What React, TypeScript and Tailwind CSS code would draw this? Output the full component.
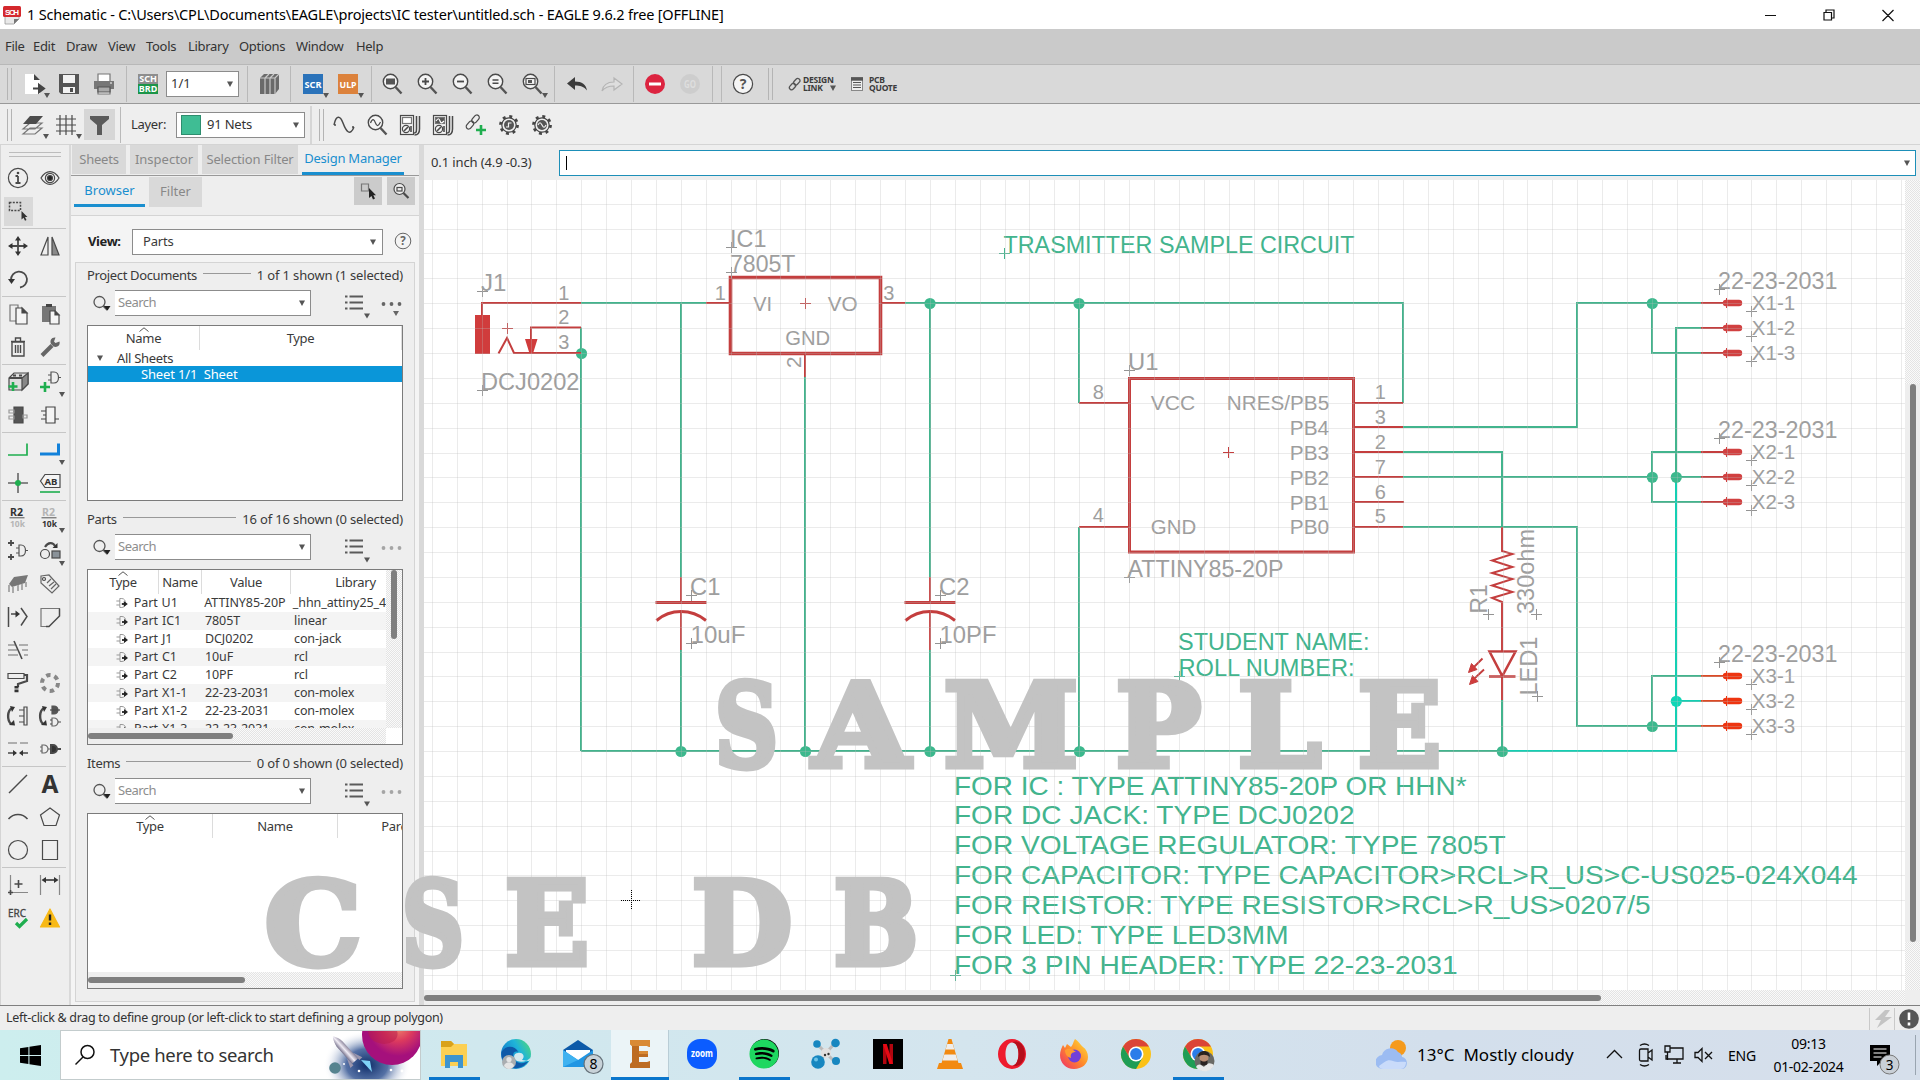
import React from "react";
import { FaSpotify } from "react-icons/fa";

type Kids = { children?: React.ReactNode };

/* ---------- small shared pieces ---------- */

function Ic({ children, caret = false, cx = 24, cy = 24 }: Kids & { caret?: boolean; cx?: number; cy?: number }) {
  return (
    <svg width="24" height="24" viewBox="0 0 24 24" fill="none" stroke="#4a4a4a" strokeWidth="1.2" className="shrink-0 overflow-visible">
      {children}
      {caret && <path d={`M${cx - 3} ${cy - 2}h6l-3 5z`} fill="#555" stroke="none" />}
    </svg>
  );
}

function Down({ className = "" }: { className?: string }) {
  return (
    <svg width="6" height="6" viewBox="0 0 6 6" className={className}>
      <path d="M0 .5h6L3 6z" fill="#555" />
    </svg>
  );
}

function Sep({ className = "" }: { className?: string }) {
  return (
    <div className={`flex h-9 shrink-0 justify-center ${className}`}>
      <div className="h-full w-px bg-[#b9b9b9]" />
    </div>
  );
}

function Grip() {
  return (
    <div className="flex h-8 w-4 shrink-0 items-stretch gap-[3px] pl-[7px]">
      <div className="w-px bg-[#b4b4b4]" />
      <div className="w-px bg-[#b4b4b4]" />
    </div>
  );
}

function Cell({ children, className = "w-[35px]" }: Kids & { className?: string }) {
  return <div className={`flex shrink-0 items-center justify-center ${className}`}>{children}</div>;
}

function Magnifier({ children, caret }: Kids & { caret?: boolean }) {
  return (
    <Ic caret={caret} cx={25} cy={23}>
      <circle cx="10.5" cy="9.5" r="7.2" fill="#f4f4f4" strokeWidth="1.4" />
      <path d="M15.5 15l6 6.500" strokeWidth="2.400" stroke="#555" />
      {children}
    </Ic>
  );
}

/* ---------- title and menu ---------- */

function TitleBar() {
  return (
    <div className="flex h-[29px] items-center bg-white pl-[3px]">
      <svg width="18" height="20" viewBox="0 0 18 20">
        <path d="M2 3h14v11l-5 5H2z" fill="#e9e9e9" stroke="#999" strokeWidth=".8" />
        <path d="M16 14l-5 5v-5z" fill="#777" />
        <rect width="18" height="11" rx="1.5" y="1" fill="#d4282d" />
        <text x="2" y="9.6" fontSize="8" fontWeight="bold" fill="#fff" textLength="14" fontFamily="Liberation Sans, sans-serif">SCH</text>
      </svg>
      <span className="ml-[6px] grow whitespace-pre text-[14.5px] tracking-[-0.19px] text-black">
        1 Schematic - C:\Users\CPL\Documents\EAGLE\projects\IC tester\untitled.sch - EAGLE 9.6.2 free [OFFLINE]
      </span>
      <svg width="160" height="28" viewBox="0 0 160 28" fill="none" stroke="#111" strokeWidth="1.2">
        <path d="M5 14.500h11M64 18.500v-7h7.500v7.500h-7.500zM66 11V9h8v8h-2M122.500 9l11 11M133.500 9l-11 11" />
      </svg>
    </div>
  );
}

function MenuBar() {
  const items = [
    ["File", "w-[28px]"], ["Edit", "w-[33px]"], ["Draw", "w-[42px]"], ["View", "w-[38px]"], ["Tools", "w-[42px]"],
    ["Library", "w-[51px]"], ["Options", "w-[57px]"], ["Window", "w-[60px]"], ["Help", "w-[40px]"],
  ];
  return (
    <div className="flex h-[35px] items-center bg-[#cacaca] pl-[5px] text-[13px] tracking-[-0.3px] text-[#333]">
      {items.map(([t, w]) => (
        <span key={t} className={`${w} shrink-0 whitespace-nowrap`}>{t}</span>
      ))}
    </div>
  );
}

/* ---------- toolbars ---------- */

function MainToolbar() {
  return (
    <div className="flex h-[40px] items-center border-t border-b border-t-[#b8b8b8] border-b-[#999] bg-[#d9d9d9]">
      <Grip />
      <Cell>
        <Ic caret cx={25} cy={23}>
          <path d="M3 2h9l6 6v14H3z" fill="#fff" stroke="none" />
          <path d="M12 2v6h6z" fill="#444" stroke="none" />
          <path d="M11 16.5h8M17 12.8l5 3.7-5 3.7z" stroke="#444" strokeWidth="2" fill="#444" />
        </Ic>
      </Cell>
      <Cell>
        <Ic>
          <path d="M2 2h20v20H4l-2-2z" fill="#555" stroke="none" />
          <path d="M6 3h12v8H6zM6 15h12v6H6z" fill="#f2f2f2" stroke="none" />
          <path d="M13 16h3v4h-3z" fill="#4c4c4c" stroke="none" />
        </Ic>
      </Cell>
      <Cell>
        <Ic>
          <path d="M6 2h12v8H6zM6 16h12v6H6z" fill="#fff" stroke="#777" />
          <path d="M2 9h20v8H2z" fill="#777" stroke="none" />
          <path d="M6 15h12v5H6z" fill="#aaa" stroke="#555" />
          <path d="M18 11h2" stroke="#fff" />
        </Ic>
      </Cell>
      <Sep className="w-[11px]" />
      <Cell className="w-[32px]">
        <div className="h-5 w-5 text-center text-[9px] leading-[10px] font-bold text-white">
          <div className="h-[10px] bg-[#8e8e8e]">SCH</div>
          <div className="h-[10px] bg-[#1c9548]">BRD</div>
        </div>
      </Cell>
      <div className="ml-[2px] flex h-[26px] w-[73px] items-center justify-between border border-[#8c8c8c] bg-white pr-[5px] pl-1 text-[13px] text-[#333]">
        1/1 <Down />
      </div>
      <Sep className="w-[16px]" />
      <Cell className="w-[28px]">
        <Ic>
          <path d="M3 6l4-4h15v15l-4 5H3z" fill="#6a6a6a" stroke="none" />
          <path d="M3 6h15l4-4M8 6v16M13 6v16M18 6v16M8 6l4-4M13 6l4-4" stroke="#c9c9c9" />
        </Ic>
      </Cell>
      <Sep className="w-[15px]" />
      <Cell className="w-[30px]">
        <Ic caret cx={25} cy={23}>
          <rect x="2" y="2" width="20" height="20" fill="#2b73ba" stroke="none" />
          <text x="3.5" y="15.5" fontSize="9.5" fontWeight="bold" fill="#fff" stroke="none" textLength="17" lengthAdjust="spacingAndGlyphs">SCR</text>
        </Ic>
      </Cell>
      <Cell className="w-[40px]">
        <Ic caret cx={25} cy={23}>
          <rect x="2" y="2" width="20" height="20" fill="#dc823c" stroke="none" />
          <text x="3.5" y="15.5" fontSize="9.5" fontWeight="bold" fill="#fff" stroke="none" textLength="17" lengthAdjust="spacingAndGlyphs">ULP</text>
        </Ic>
      </Cell>
      <Sep className="w-[6px]" />
      <Cell><Magnifier><rect x="6" y="6.5" width="9" height="6" fill="#555" stroke="none" /></Magnifier></Cell>
      <Cell><Magnifier><path d="M7 9.5h7M10.5 6v7" strokeWidth="1.8" /></Magnifier></Cell>
      <Cell><Magnifier><path d="M7 9.5h7" strokeWidth="1.8" /></Magnifier></Cell>
      <Cell><Magnifier><path d="M7.5 8h6M7.5 11.3h6" strokeWidth="1.5" /></Magnifier></Cell>
      <Cell><Magnifier caret><rect x="6" y="6.5" width="9" height="6" /><rect x="8" y="8" width="4" height="3" fill="#555" stroke="none" /></Magnifier></Cell>
      <Sep className="w-[10px]" />
      <Cell><Ic><path d="M10 5v4.500c7 0 11 3 12 9-3-4-7-5-12-5V18L2 11.500z" fill="#3c3c3c" stroke="none" /></Ic></Cell>
      <Cell><Ic><path d="M14 6v4C7 10 3 13 2 19c3-4 7-5 12-5v4l8-6z" fill="#dedede" stroke="#b5b5b5" /></Ic></Cell>
      <Sep className="w-[8px]" />
      <Cell><Ic><circle cx="12" cy="12" r="10" fill="#dc2440" stroke="none" /><path d="M6 12h12" stroke="#fff" strokeWidth="3" /></Ic></Cell>
      <Cell>
        <Ic>
          <circle cx="12" cy="12" r="10" fill="#cdcdcd" stroke="none" />
          <text x="6" y="15.5" fontSize="10" fontWeight="bold" fill="#dedede" stroke="none" textLength="12" lengthAdjust="spacingAndGlyphs">GO</text>
        </Ic>
      </Cell>
      <Sep className="w-[10px]" />
      <Sep className="w-[9px]" />
      <Cell className="w-[34px]">
        <Ic>
          <circle cx="12" cy="12" r="9.6" fill="#f5f5f5" strokeWidth="1.2" />
          <text x="12" y="17" fontSize="14" fontWeight="bold" fill="#555" stroke="none" textAnchor="middle">?</text>
        </Ic>
      </Cell>
      <div className="flex h-8 w-[28px] gap-[3px] pl-[8px]"><div className="w-px bg-[#b4b4b4]" /><div className="w-px bg-[#b4b4b4]" /></div>
      <svg width="13" height="14" viewBox="0 0 13 14" fill="none" stroke="#555" strokeWidth="1.3">
        <rect x="-3.6" y="-2" width="7.2" height="4.4" rx="2.2" transform="translate(8.6 4.6) rotate(-48)" />
        <rect x="-3.6" y="-2" width="7.2" height="4.4" rx="2.2" transform="translate(4.4 9.4) rotate(-48)" />
      </svg>
      <div className="ml-[2px] w-[48px] text-[8.5px] leading-[8px] font-bold tracking-[-0.25px] text-[#3c3c3c]">
        DESIGN
        <div className="flex items-center gap-[7px]">LINK <Down /></div>
      </div>
      <svg width="12" height="14" viewBox="0 0 12 14" stroke="#555" strokeWidth="1">
        <rect x=".5" y=".5" width="11" height="13" fill="#eee" stroke="#888" />
        <path d="M0 2h12" strokeWidth="3.4" />
        <path d="M2 5.500h8M2 8h8M2 10.500h8" />
      </svg>
      <div className="ml-[6px] text-[8.5px] leading-[8px] font-bold tracking-[-0.25px] text-[#3c3c3c]">PCB<br />QUOTE</div>
    </div>
  );
}

function Gear({ wave }: { wave: string }) {
  return (
    <Ic>
      <circle cx="12" cy="12" r="8.400" stroke="#444" strokeWidth="3" strokeDasharray="2.900 3.700" />
      <circle cx="12" cy="12" r="7.200" fill="#eee" stroke="#444" strokeWidth="1.200" />
      <circle cx="12" cy="12" r="5" fill="#555" stroke="none" />
      <path d={wave} stroke="#f2f2f2" strokeWidth="1.200" />
    </Ic>
  );
}

function Meter({ wave }: { wave?: boolean }) {
  return (
    <Ic>
      <rect x="2.5" y="2.5" width="13" height="19" fill="#f4f4f4" />
      <rect x="4.5" y="4.5" width="9" height="6" fill={wave ? "#555" : "#fff"} stroke="#777" />
      {wave && <path d="M5 8c2-3 3-3 4 0s2 2 4 0" stroke="#fff" />}
      <circle cx="8" cy="16" r="3.6" />
      <path d="M10 14l-4 4M13 13v6" strokeWidth="1.6" />
      <path d="M18.500 3v13c0 4-1 4-3 4M21.500 3v13c0 5-2 6-5 6" strokeWidth="1.500" />
    </Ic>
  );
}

function SecondToolbar() {
  return (
    <div className="flex h-[41px] items-center border-b border-[#d4d4d4] bg-[#eee] pt-px">
      <Grip />
      <Cell className="w-[34px]">
        <Ic caret cx={25} cy={23}>
          <path d="M2 21l7-6h12l-7 6zM2 16l7-6h12l-7 6z" fill="#eee" stroke="#777" />
          <path d="M2 11l7-8h13l-7 8z" fill="#4c4c4c" stroke="none" />
        </Ic>
      </Cell>
      <Cell className="w-[32px]">
        <Ic caret cx={25} cy={23}><path d="M2 6h20M2 12h20M2 18h20M6 2v20M12 2v20M18 2v20" /></Ic>
      </Cell>
      <Cell className="ml-[2px] h-[31px] w-[31px] bg-[#d6d6d6]">
        <Ic><path d="M2 3h19v3l-7 6v10H9V12L2 6z" fill="#5a5a5a" stroke="none" /></Ic>
      </Cell>
      <Sep className="w-[11px]" />
      <span className="ml-[5px] w-[45px] text-[13px] tracking-[-0.3px] text-[#333]">Layer:</span>
      <div className="flex h-[26px] w-[129px] items-center border border-[#8c8c8c] bg-white pr-[5px] pl-1 text-[13px] tracking-[-0.2px] text-[#333]">
        <div className="h-5 w-5 border border-[#2e8d6e] bg-[#3fbd94]" />
        <span className="ml-[6px] grow">91 Nets</span>
        <Down />
      </div>
      <div className="ml-[5px] h-[38px] w-[2px] bg-[#d6d6d6]" />
      <Grip />
      <Cell className="w-[32px]"><Ic><path d="M2 12C4 2 8 2 11 10s7 14 11 4M2 12h2M20 14h2" strokeWidth="1.500" /></Ic></Cell>
      <Cell className="w-[33px]"><Magnifier><path d="M5.500 10c2-5 3.500-4 5 0s3 3 5-1" /></Magnifier></Cell>
      <Cell className="w-[33px]"><Meter /></Cell>
      <Cell className="w-[33px]"><Meter wave /></Cell>
      <Cell className="w-[33px]">
        <Ic>
          <rect x="-4.500" y="-2.500" width="9" height="5" rx="2.500" transform="translate(11.500 6) rotate(-50)" />
          <rect x="-4.500" y="-2.500" width="9" height="5" rx="2.500" transform="translate(6 12) rotate(-50)" />
          <path d="M17 12v10M12 17h10" stroke="#1fae4f" strokeWidth="2.600" />
        </Ic>
      </Cell>
      <Cell className="w-[33px]"><Gear wave="M9 14h2.500v-4h3" /></Cell>
      <Cell className="w-[33px]"><Gear wave="M8 12c1.500-3 2.500-3 4 0s2.500 3 4 0" /></Cell>
    </div>
  );
}

/* ---------- left tool palette ---------- */

const gate = "M0 0h2a4 4 0 0 1 0 8H0z";

const tools: { h: string; cells: (React.ReactNode | null)[] }[] = [
  {
    h: "h-[67px]",
    cells: [
      <Ic><circle cx="12" cy="12" r="9.600" /><path d="M12 10v7M9.500 10H12M9.500 17h5" strokeWidth="1.800" /><circle cx="12" cy="7" r="1.300" fill="#444" stroke="none" /></Ic>,
      <Ic><path d="M3 12c5-8.500 13-8.500 18 0-5 8.500-13 8.500-18 0z" /><circle cx="12" cy="12" r="4.600" /><circle cx="12" cy="12" r="2.500" fill="#222" /></Ic>,
      <div className="flex h-[29px] w-[29px] items-center justify-center bg-[#d9d9d9]">
        <Ic><path d="M3.500 3.500h11v8h-11z" strokeDasharray="2 1.300" strokeWidth="1.500" /><path d="M15.500 12v8.500l2-1.700 1.500 3 1.500-.8-1.500-3h2.500z" fill="#333" stroke="none" /></Ic>
      </div>,
      null,
    ],
  },
  {
    h: "h-[68px]",
    cells: [
      <Ic><path d="M4 12h16M12 4v16" strokeWidth="1.800" /><path d="M12 2l3 4.500H9zM12 22l3-4.500H9zM2 12l4.500-3v6zM22 12l-4.500-3v6z" fill="#333" stroke="none" /></Ic>,
      <Ic><path d="M10 3v18H3z" /><path d="M14 3v18h7z" fill="#8a8a8a" /></Ic>,
      <Ic><path d="M5 13a8 8 0 1 1 9 7.500" strokeWidth="1.800" /><path d="M2 12h7l-3.500 5z" fill="#333" stroke="none" /></Ic>,
      null,
    ],
  },
  {
    h: "h-[68px]",
    cells: [
      <Ic><path d="M4 3h8v16H4z" stroke="#777" /><path d="M10 6h6l5 5v11H10z" fill="#f4f4f4" /><path d="M16 6v5h5z" fill="#444" /></Ic>,
      <Ic><path d="M4 4h14v16H4z" fill="#777" stroke="none" /><path d="M8 2h6v3H8z" fill="#444" stroke="none" /><path d="M12 9h5l4 4v9h-9z" fill="#f4f4f4" /><path d="M17 9v4h4z" fill="#444" /></Ic>,
      <Ic><path d="M6 7h12v14H6zM5 6.500h14M9.500 6V3h5v3M9.500 10v8M12 10v8M14.500 10v8" strokeWidth="1.400" /></Ic>,
      <Ic><path d="M4 20.500L14 10.500" strokeWidth="4" stroke="#666" /><path d="M21.500 6.500l-4 1.500-1.500-1.500 1.500-4c-4-.5-6 3-4.500 6.500l2.500 2.500c3.500 1.500 7-1 6-5z" fill="#666" stroke="none" /></Ic>,
    ],
  },
  {
    h: "h-[68px]",
    cells: [
      <Ic><path d="M3 8l5-5h14v11l-6 6H3z" fill="#ddd" /><path d="M16 20V8l6-5v11z" fill="#888" /><path d="M3 8h13M7 5.500h3M13 5.500h3" strokeWidth="1.800" /><path d="M7 12v9M2.500 16.500h9" stroke="#1fae4f" strokeWidth="2.600" /></Ic>,
      <Ic caret><path d="M13 2h3c6 0 6 11 0 11h-3zM10 5h3M10 10h3M20 7.500h3" stroke="#555" /><path d="M7 12v10M2 17h10" stroke="#1fae4f" strokeWidth="2.600" /></Ic>,
      <Ic><path d="M8 4h9v16H8z" fill="#555" /><path d="M3 7h5v3H3zM3 13h5v3H3zM17 12h4v3h-4z" stroke="#999" /></Ic>,
      <Ic><path d="M8 4h9v16H8zM3 8h5M3 16h5M5 12h3M17 16h4" fill="#f4f4f4" stroke="#444" /></Ic>,
    ],
  },
  {
    h: "h-[68px]",
    cells: [
      <Ic><path d="M2 17h19V5.500" stroke="#1fae4f" strokeWidth="1.700" /></Ic>,
      <Ic caret><path d="M2 16h18.500V5.500" stroke="#1281da" strokeWidth="3" /></Ic>,
      <Ic><path d="M12 2v20M2 12h20" stroke="#666" strokeWidth="1.600" /><circle cx="12" cy="12" r="3" fill="#1fae4f" stroke="none" /></Ic>,
      <Ic>
        <path d="M7 3.500h15v13H7L2.500 10z" fill="#f4f4f4" />
        <path d="M2 21h20" stroke="#1fae4f" strokeWidth="1.600" />
        <text x="6.500" y="13.500" fontSize="9.500" fontWeight="bold" fill="#333" stroke="none" textLength="13" lengthAdjust="spacingAndGlyphs">AB</text>
      </Ic>,
    ],
  },
  {
    h: "h-[266px]",
    cells: [
      <ValueIcon top="#333" bottom="#b5b5b5" />,
      <ValueIcon top="#b5b5b5" bottom="#333" caret />,
      <Ic><path d="M2 4h6M5 1v6M2 18h6M5 15v6" strokeWidth="1.800" /><path d="M13 6h2c6 0 6 11 0 11h-2zM10 9h3M10 14h3M19.500 11.500H22" stroke="#555" /></Ic>,
      <Ic caret><circle cx="7" cy="15" r="4.500" /><rect x="14" y="12" width="8" height="7" fill="#8a9299" /><path d="M7 8c3-5 8-5 10-1" strokeWidth="2.200" /><path d="M19.500 4v5h-5z" fill="#333" stroke="none" /></Ic>,
      <Ic><path d="M3 12l5-7 14-2-3 8-13 4z" fill="#777" stroke="none" /><path d="M3 13v7M7 15v6M12 13v6M16 12v6M20 10v5" stroke="#aaa" strokeWidth="2" /></Ic>,
      <Ic><path d="M3 4l8-1 10 11-7 7L3 11z" stroke="#666" /><circle cx="6" cy="7" r="1.500" /><path d="M9 11l4-4M11 14l5-4M13 17l5-5" stroke="#666" /></Ic>,
      <Ic><path d="M2.500 2v20" strokeWidth="1.500" /><path d="M5 9h6M15 3l6 8.500-6 9" strokeWidth="1.500" /><path d="M9.500 5.500L14 9l-4.500 3.500z" fill="#333" stroke="none" /></Ic>,
      <Ic><path d="M22 3.500H3v18h8" stroke="#777" /><path d="M8 21.500h3L21.500 11V3.500" strokeWidth="1.500" /></Ic>,
      <Ic><path d="M2 7h7M13 7h9M2 12h9M16 12h6M2 17h10M18 17h4" stroke="#999" strokeWidth="1.500" /><path d="M8 3l8 18" strokeWidth="1.600" /></Ic>,
      null,
      <Ic><path d="M2 2.500h16v5H2z" /><path d="M18 4h3v6l-9 3v3" strokeWidth="2.200" /><path d="M10.500 15v7" stroke="#333" strokeWidth="4" strokeDasharray="2.600 1" /></Ic>,
      <Ic><circle cx="12" cy="12" r="8" stroke="#888" strokeWidth="4" strokeDasharray="4.400 4" /></Ic>,
      <Ic><path d="M6 4C1 7 1 16 5 20" strokeWidth="2.400" /><path d="M4 2l5 1-3 5zM3 21l6 .5L8 16z" fill="#333" stroke="none" /><path d="M18 3h3v18h-3zM13 6h5M13 12h5M13 18h5" /></Ic>,
      <Ic><path d="M6 4C1 7 1 16 5 20" strokeWidth="2.400" /><path d="M4 2l5 1-3 5zM3 21l6 .5L8 16z" fill="#333" stroke="none" /><g transform="translate(14 2)"><path d={gate} fill="#555" stroke="#555" /><path d="M-2 4h10" /></g><g transform="translate(14 14)"><path d={gate} stroke="#666" /><path d="M-2 2h2M-2 6h2M6 4h3" /></g></Ic>,
      <Ic><path d="M2 6h9M14 6h8" stroke="#999" strokeWidth="1.600" /><path d="M2 16h8M14 16h8" strokeWidth="1.600" /><path d="M7 13l4 3-4 3zM17 13l-4 3 4 3z" fill="#333" stroke="none" /></Ic>,
      <Ic><g transform="translate(4 8)"><path d={gate} stroke="#666" /><path d="M-2 2h2M-2 6h2M6 4h6" stroke="#666" /></g><g transform="translate(13 8)"><path d={gate} fill="#333" strokeWidth="2" /><path d="M6 4h4" strokeWidth="2" /></g></Ic>,
    ],
  },
  {
    h: "h-[101px]",
    cells: [
      <Ic><path d="M3 21L21 3" strokeWidth="1.500" /></Ic>,
      <Ic><text x="12" y="20.500" fontSize="24.500" fontWeight="bold" textAnchor="middle" fill="#333" stroke="none">A</text></Ic>,
      <Ic><path d="M2.500 14c5-6 14-6 19 0" strokeWidth="1.500" /></Ic>,
      <Ic><path d="M12 3l9.500 7-3.500 10.500H6L2.500 10z" /></Ic>,
      <Ic><circle cx="12" cy="12" r="9.500" /></Ic>,
      <Ic><path d="M4.500 2.500h15v19h-15z" /></Ic>,
    ],
  },
  {
    h: "h-[68px]",
    cells: [
      <Ic><path d="M4.500 2v17M5 19.500h17" stroke="#888" /><path d="M12.500 7v8M8.500 11h8M4.500 17v5M2 19.500h5" strokeWidth="1.600" /></Ic>,
      <Ic><path d="M2.500 2v20M21.500 2v20" stroke="#888" /><path d="M6 7h12" strokeWidth="1.800" /><path d="M3.500 7L8 4v6zM20.500 7L16 4v6z" fill="#333" stroke="none" /></Ic>,
      <Ic>
        <text x="2" y="11" fontSize="11" fill="#444" stroke="#444" strokeWidth=".3" textLength="18" lengthAdjust="spacingAndGlyphs">ERC</text>
        <path d="M10 17l3.500 3.500L21 13" stroke="#1fae4f" strokeWidth="3.200" />
      </Ic>,
      <Ic><path d="M12 3l9.500 18h-19z" fill="#f8b916" stroke="#f8b916" strokeLinejoin="round" /><path d="M12 8.500v6M12 16.500v2.500" stroke="#222" strokeWidth="2.400" /></Ic>,
    ],
  },
];

function ValueIcon({ top, bottom, caret }: { top: string; bottom: string; caret?: boolean }) {
  return (
    <Ic caret={caret}>
      <text x="4" y="9.500" fontSize="10" fontWeight="bold" fill={top} stroke="none" textLength="13" lengthAdjust="spacingAndGlyphs">R2</text>
      <path d="M3.500 11.800h15" stroke="#555" strokeWidth="1" />
      <text x="4" y="20.500" fontSize="9.500" fontWeight="bold" fill={bottom} stroke="none" textLength="15" lengthAdjust="spacingAndGlyphs">10k</text>
    </Ic>
  );
}

function Palette() {
  return (
    <div className="w-[69px] shrink-0 border-l border-[#d4d4d4] bg-[#eee]">
      <div className="mx-2 mt-[7px] h-[5px] border-t border-b border-[#bdbdbd]" />
      <div className="mt-[4px]">
        {tools.map((g, i) => (
          <div key={i} className={`${g.h} ${i ? "border-t border-[#c6c6c6]" : ""} mr-[3px] ml-px grid auto-rows-fr grid-cols-2`}>
            {g.cells.map((c, j) => (
              <div key={j} className="flex items-center justify-center">{c}</div>
            ))}
          </div>
        ))}
      </div>
    </div>
  );
}

/* ---------- design manager ---------- */

function ListIcon() {
  return (
    <svg width="24" height="26" viewBox="0 0 24 26" stroke="#5a5a5a" strokeWidth="2.200" className="shrink-0 overflow-visible">
      <path d="M0 6.500h2.500M0 12.500h2.500M0 18.500h2.500M4.500 6.500H18M4.500 12.500H18M4.500 18.500H18" />
      <path d="M19 23.500h6l-3 5z" fill="#555" stroke="none" />
    </svg>
  );
}

function Section({ title, info, active, children }: Kids & { title: string; info: string; active?: boolean }) {
  return (
    <section className="h-[244px] pl-[11px]">
      <div className="flex h-[14px] w-[316px] items-center gap-[6px] text-[13px] leading-[14px] whitespace-nowrap">
        <span className="tracking-[-0.35px]">{title}</span>
        <div className="mb-1 h-px grow bg-[#999]" />
        <span className="tracking-[-0.15px]">{info}</span>
      </div>
      <div className="mt-[8px] flex h-[26px] w-[316px]">
        <svg width="28" height="26" viewBox="0 0 28 26" fill="none" stroke="#555" strokeWidth="1.300">
          <circle cx="12.500" cy="12" r="5.500" /><path d="M16.500 16l4 4" strokeWidth="2" /><path d="M17 16h6.500l-3 4.500z" fill="#222" stroke="none" />
        </svg>
        <div className="flex w-[196px] items-center justify-between border border-l-0 border-[#8c8c8c] bg-white pr-[5px] pl-[3px] text-[13px] tracking-[-0.500px] text-[#8e8e8e]">
          Search <Down />
        </div>
        <div className="w-[34px]" />
        <ListIcon />
        <svg width="22" height="26" viewBox="0 0 22 26" className="ml-[12px] shrink-0" fill={active ? "#666" : "#a5a5a5"}>
          <circle cx="2.500" cy="14" r="1.900" /><circle cx="10.500" cy="14" r="1.900" /><circle cx="18.500" cy="14" r="1.900" />
          {active && <path d="M12 21h6l-3 5z" />}
        </svg>
      </div>
      <div className="mt-[9px] h-[176px] w-[316px] overflow-hidden border border-[#7b7b7b] bg-white">{children}</div>
    </section>
  );
}

function Head({ cols }: { cols: [string, string][] }) {
  return (
    <div className="flex h-[24px] shrink-0 text-[13px] leading-[24px] tracking-[-0.3px]">
      {cols.map(([t, w], i) => (
        <div key={t} className={`${w} relative h-full shrink-0 overflow-hidden border-r border-[#dcdcdc] text-center whitespace-nowrap`}>
          {t}
          {i === 0 && (
            <svg width="10" height="5" viewBox="0 0 10 5" className="absolute top-[1px] left-1/2 -translate-x-1/2" fill="none" stroke="#555">
              <path d="M.5 4.500L5 .8l4.500 3.700" />
            </svg>
          )}
        </div>
      ))}
    </div>
  );
}

const stipple = "bg-[repeating-conic-gradient(#e4e4e4_0_25%,#fafafa_0_50%)] bg-[length:2px_2px]";

const parts = [
  ["U1", "ATTINY85-20P", "_hhn_attiny25_4"],
  ["IC1", "7805T", "linear"],
  ["J1", "DCJ0202", "con-jack"],
  ["C1", "10uF", "rcl"],
  ["C2", "10PF", "rcl"],
  ["X1-1", "22-23-2031", "con-molex"],
  ["X1-2", "22-23-2031", "con-molex"],
  ["X1-3", "22-23-2031", "con-molex"],
];

function Panel() {
  const tab = "mr-1 flex h-[29px] items-center justify-center bg-[#d9d9d9] text-[#888]";
  return (
    <div className="flex w-[355px] shrink-0 flex-col border-r-[5px] border-l-2 border-[#d9d9d9] bg-[#eee] text-[13px] text-[#3a3a3a]">
      <div className="flex h-[31px] shrink-0 border-b border-[#999] pl-px">
        <div className={`${tab} w-[54px] tracking-[-0.2px]`}>Sheets</div>
        <div className={`${tab} w-[68px]`}>Inspector</div>
        <div className={`${tab} w-[96px] tracking-[-0.15px]`}>Selection Filter</div>
        <div className="flex h-[30px] w-[102px] items-center justify-center border-b-[3px] border-[#1a8fcf] pt-px text-[#1a8fcf]"><span className="-tracking-[0.25px] whitespace-nowrap">Design Manager</span></div>
      </div>
      <div className="flex h-[39px] shrink-0 pt-px pl-[3px]">
        <div className="flex h-[30px] w-[71px] items-center justify-center border-b-[3px] border-[#1a8fcf] text-[#1a8fcf]">Browser</div>
        <div className="ml-1 flex h-[30px] w-[53px] items-center justify-center bg-[#d9d9d9] text-[#888]">Filter</div>
        <div className="grow" />
        <div className="flex h-[28px] w-[28px] items-center justify-center bg-[#cbcbcb]">
          <Ic><path d="M5.500 5h7v7h-7z" stroke="#777" /><path d="M13 9v10l2.500-2 1.500 3.500 2-1-1.700-3.300H20z" fill="#222" stroke="none" /></Ic>
        </div>
        <div className="mr-[4px] ml-[5px] flex h-[28px] w-[28px] items-center justify-center bg-[#cbcbcb]">
          <Ic><circle cx="10.500" cy="10" r="5.500" fill="#eee" /><path d="M14.500 14l5 5" strokeWidth="2.200" /><rect x="8" y="8.500" width="5" height="3.500" /></Ic>
        </div>
      </div>
      <div className="flex grow flex-col border-t border-[#d4d4d4] bg-[#f4f4f4] pr-1 pl-1">
        <div className="flex h-[46px] items-center pt-[5px] pl-[13px]">
          <b className="w-[44px] tracking-[-0.4px] text-[#222]">View:</b>
          <div className="flex h-[26px] w-[251px] items-center justify-between border border-[#8c8c8c] bg-white pr-[6px] pl-[10px] tracking-[-0.2px]">
            Parts <Down />
          </div>
          <svg width="18" height="18" viewBox="0 0 18 18" className="mb-[2px] ml-[11px]">
            <circle cx="9" cy="9" r="7.800" fill="none" stroke="#666" />
            <text x="9" y="13.300" fontSize="11.500" fontWeight="bold" textAnchor="middle" fill="#666">?</text>
          </svg>
        </div>
        <div className="h-[740px] border border-[#d4d4d4] bg-[#eee] pt-[5px]">
          <Section title="Project Documents" info="1 of 1 shown (1 selected)" active>
            <Head cols={[["Name", "w-[112px]"], ["Type", "w-[202px]"]]} />
            <div className="flex h-4 items-center pl-[9px] leading-4 tracking-[-0.3px]"><Down /><span className="ml-[14px]">All Sheets</span></div>
            <div className="h-4 bg-[#0a96d9] pl-[53px] leading-4 tracking-[-0.15px] whitespace-pre text-white">Sheet 1/1  Sheet</div>
          </Section>
          <Section title="Parts" info="16 of 16 shown (0 selected)">
            <div className="grid h-full grid-cols-[298px_16px] grid-rows-[158px_16px]">
              <div className="overflow-hidden">
                <Head cols={[["Type", "w-[71px]"], ["Name", "w-[43px]"], ["Value", "w-[89px]"], ["Library", "w-[130px]"]]} />
                {parts.map(([n, v, l], i) => (
                  <div key={n} className={`flex h-[18px] text-[12.500px] leading-[18px] tracking-[-0.1px] whitespace-nowrap ${i % 2 ? "bg-[#f4f4f4]" : "bg-white"}`}>
                    <svg width="46" height="18" viewBox="0 0 46 18" fill="none" stroke="#999">
                      <path d="M32 4.500h2c5 0 5 9 0 9h-2zM28.500 7H32M28.500 11H32" /><path d="M34 10h4" stroke="#222" strokeWidth="1.800" /><path d="M36 7l4 3-4 3z" fill="#222" stroke="none" />
                    </svg>
                    <span className="w-[28px]">Part</span>
                    <span className="w-[43px]">{n}</span>
                    <span className="w-[89px]">{v}</span>
                    <span>{l}</span>
                  </div>
                ))}
              </div>
              <div className={`${stipple} flex justify-center`}><div className="h-[69px] w-[6px] rounded-full bg-[#7f7f7f]" /></div>
              <div className={`${stipple} flex items-center`}><div className="flex h-full w-[145px] items-center bg-[#eee]"><div className="h-[6px] w-full rounded-full bg-[#7f7f7f]" /></div></div>
            </div>
          </Section>
          <Section title="Items" info="0 of 0 shown (0 selected)">
            <div className="flex h-full flex-col">
              <Head cols={[["Type", "w-[125px]"], ["Name", "w-[125px]"], ["Parent", "w-[126px]"]]} />
              <div className="grow" />
              <div className={`${stipple} h-4`}><div className="flex h-full w-[157px] items-center bg-[#eee]"><div className="h-[6px] w-full rounded-full bg-[#7f7f7f]" /></div></div>
            </div>
          </Section>
        </div>
      </div>
    </div>
  );
}

/* ---------- schematic ---------- */

const GREEN = "#42b48d";
const CYAN = "#14cfb3";
const RED = "#c43e3e";
const GRAY = "#9e9e9e";

/* Label fitted between two x positions. */
function L({ x, e, y, s = 24.200, c = GRAY, t }: { x: number; e?: number; y: number; s?: number; c?: string; t: string }) {
  const b = s * 0.06;
  return (
    <text x={x - b} y={y} fontSize={s} fill={c} {...(e ? { textLength: e - x + 2 * b, lengthAdjust: "spacingAndGlyphs" } : {})}>
      {t}
    </text>
  );
}

/* Label turned a quarter to the left, starting at (x, y). */
function V({ x, y, len, t, s = 24 }: { x: number; y: number; len: number; t: string; s?: number }) {
  return (
    <text transform={`translate(${x} ${y}) rotate(-90)`} fontSize={s} fill={GRAY} textLength={len} lengthAdjust="spacingAndGlyphs">{t}</text>
  );
}

function Plus({ at, c = "#949494" }: { at: [number, number][]; c?: string }) {
  return <path d={at.map(([x, y]) => `M${x - 5.500} ${y}h11M${x} ${y - 5.500}v11`).join("")} stroke={c} strokeWidth="1" />;
}

const gx = Array.from({ length: 60 }, (_, i) => Math.round(432.300 + 24.900 * i - 0.500) + 0.500);
const gy = Array.from({ length: 32 }, (_, i) => Math.round(204.200 + 24.880 * i - 0.500) + 0.500);

const notes: [string, number, number][] = [
  ["FOR IC : TYPE ATTINY85-20P OR HHN*", 1465, 794.500],
  ["FOR DC JACK: TYPE DCJ0202", 1353, 824.300],
  ["FOR VOLTAGE REGULATOR: TYPE 7805T", 1504, 854.300],
  ["FOR CAPACITOR: TYPE CAPACITOR>RCL>R_US>C-US025-024X044", 1856, 884.300],
  ["FOR REISTOR: TYPE RESISTOR>RCL>R_US>0207/5", 1649, 914.300],
  ["FOR LED: TYPE LED3MM", 1287, 944.300],
  ["FOR 3 PIN HEADER: TYPE 22-23-2031", 1456, 974.300],
];

function Cap({ x }: { x: number }) {
  return (
    <g stroke={RED} fill="none">
      <path d={`M${x} 577v25M${x} 611v39`} strokeWidth="1.800" />
      <path d={`M${x - 25.500} 602.500h51`} strokeWidth="3" />
      <path d={`M${x - 24.500} 620.500Q${x - 14} 611.500 ${x} 611.500T${x + 25} 620.500`} strokeWidth="3" />
    </g>
  );
}

function Header({ n, ys, hot }: { n: number; ys: number[]; hot?: boolean }) {
  const c = hot ? "#ee3410" : "#d14040";
  return (
    <g>
      {ys.map((y, i) => (
        <g key={y}>
          <path d={`M1701 ${y}h24`} stroke={hot ? "#dc4a25" : RED} strokeWidth="2" />
          <path d={`M1726 ${y}h13`} stroke={c} strokeWidth="6.400" strokeLinecap="round" />
          <path d={`M1726.500 ${y - 5}v10`} stroke={c} />
          <L x={1753} e={1794} y={y + 7.200} s={19.600} t={`X${n}-${i + 1}`} />
          <Plus at={[[1751.500, y + 8.500]]} />
        </g>
      ))}
      <L x={1719.500} e={1836} y={ys[0] - 13.700} t="22-23-2031" />
      <Plus at={[[1719.500, ys[0] - 13.500]]} />
    </g>
  );
}

function Schematic() {
  return (
    <svg width="1481" height="810" viewBox="424 180 1481 810" fill="none" fontFamily="Liberation Sans, Arial, sans-serif" className="block bg-white">
      {/* nets */}
      <g stroke={GREEN} strokeWidth="2">
        <path d="M581 303H706M581 327.500V751M681 303V577M681 650V751M805 377V751M905 303H1403V403M930 303V577M930 650V751M1079 303V403M1079 527V751" />
        <path d="M1403 427H1577V303H1701M1652 303V353H1701M1701 328H1676V477M1403 452H1502V527M1403 477H1652M1701 452H1652V502H1701M1403 527H1577V726H1701M1652 726V676H1701M1676 477H1701M1502 700V751M581 751H1502" />
      </g>
      <path d="M1502 751H1676V477M1676 701H1701" stroke={CYAN} strokeWidth="2" />
      {[[930, 303.500], [1079, 303.500], [581.500, 353.500], [681, 751.500], [805.500, 751.500], [930, 751.500], [1079.500, 751.500], [1652.300, 303.500], [1652.300, 477.300], [1652.300, 726.500], [1502.300, 751.500], [1676.300, 477.300]].map(([x, y]) => (
        <circle key={`${x}-${y}`} cx={x} cy={y} r="5.600" fill="#3cb88d" />
      ))}
      <circle cx="1676.300" cy="701.300" r="5.600" fill="#0fd6b6" />

      {/* J1 */}
      <path d="M581 303H482V316M581 327.500H531V340M498.500 353.500L507 338L514 353H581" stroke={RED} strokeWidth="2" />
      <path d="M475 315h15v39h-15zM525 339h12.500l-4.500 14.500h-3.500z" fill="#d03c3c" />
      <Plus at={[[507.500, 328.500]]} c={RED} />
      <L x={482.500} e={505} y={290.700} s={23.800} t="J1" />
      <L x={482.500} e={578} y={390} s={24.500} t="DCJ0202" />
      <L x={559.500} y={300} s={20} t="1" /><L x={559.500} y={324} s={20} t="2" /><L x={559.500} y={349} s={20} t="3" />

      {/* IC1 */}
      <path d="M730.500 277.500h150v76h-150z" stroke="#c43e3e" strokeWidth="3.600" />
      <path d="M706 303h24M881 303h24M805 355v22" stroke={RED} strokeWidth="2" />
      <Plus at={[[805.500, 303.500]]} c={RED} />
      <L x={731.500} e={765} y={247} t="IC1" /><L x={731.500} e={794} y={272} t="7805T" />
      <L x={716} y={300} s={20} t="1" /><L x={884.500} y={300} s={20} t="3" />
      <L x={754.500} e={771} y={310.700} s={19.600} t="VI" /><L x={829} e={856.500} y={310.700} s={19.600} t="VO" />
      <L x={786.500} e={829} y={344.700} s={19.600} t="GND" />
      <V x={801} y={368} len={11.500} t="2" s={20} />

      {/* capacitors */}
      <Cap x={681} /><Cap x={930} />
      <L x={691.500} e={719} y={594.700} t="C1" /><L x={692} e={744} y={642.700} t="10uF" />
      <L x={940.500} e={968} y={594.700} t="C2" /><L x={941} e={995} y={642.700} t="10PF" />

      {/* U1 */}
      <path d="M1129.500 378.500h224v173.500h-224z" stroke="#c43e3e" strokeWidth="3" />
      <path d="M1079 403h50M1079 527h50M1354 403h49M1354 427h49M1354 452h49M1354 477h49M1354 502h50M1354 527h49" stroke={RED} strokeWidth="2" />
      <Plus at={[[1228.500, 452.500]]} c={RED} />
      <L x={1129.500} e={1157} y={370} t="U1" />
      <L x={1129} e={1282} y={576.700} t="ATTINY85-20P" />
      <L x={1094} y={398.700} s={20} t="8" /><L x={1094} y={521.800} s={20} t="4" />
      <L x={1152} e={1194} y={409.700} s={19.600} t="VCC" /><L x={1152} e={1195} y={534} s={19.600} t="GND" />
      <L x={1228} e={1328} y={409.700} s={19.600} t="NRES/PB5" />
      {[["PB4", 435.200], ["PB3", 460], ["PB2", 484.700], ["PB1", 509.700], ["PB0", 534]].map(([t, y]) => (
        <L key={t} x={1291} e={1328} y={Number(y)} s={19.600} t={String(t)} />
      ))}
      {[["1", 399], ["3", 424], ["2", 449], ["7", 474], ["6", 499], ["5", 523]].map(([t, y]) => (
        <L key={t} x={1376} y={Number(y)} s={20} t={String(t)} />
      ))}

      {/* R1 and LED1 */}
      <path d="M1502 527V551L1512.500 554L1492 560.500L1512.500 567L1492 573L1512.500 579L1492 585.500L1512.500 592L1492 598L1502 602V651M1502 676V700" stroke={RED} strokeWidth="1.900" />
      <path d="M1489.500 651.500h26L1502.300 676zM1489 676.500h26.500" stroke={RED} strokeWidth="2.500" />
      <path d="M1482.500 658.500L1474 667M1484 669.500L1475 678" stroke={RED} strokeWidth="1.900" />
      <path d="M1468.500 672.500l3-9 5.500 6zM1469.500 684.500l3-9 5.500 6z" fill="#d03c3c" stroke={RED} />
      <V x={1486.500} y={613.500} len={29} t="R1" />
      <V x={1533.500} y={614} len={85} t="330ohm" />
      <V x={1536.500} y={695.500} len={59} t="LED1" />

      <Header n={1} ys={[303, 328, 353]} />
      <Header n={2} ys={[452, 477, 502]} />
      <Header n={3} ys={[676, 701, 726]} hot />

      {/* free text */}
      <L x={1005} e={1353} y={253} s={24.500} c={GREEN} t="TRASMITTER SAMPLE CIRCUIT" />
      <L x={1179.500} e={1368} y={649.500} c={GREEN} t="STUDENT NAME:" />
      <L x={1180} e={1353} y={675.700} c={GREEN} t="ROLL NUMBER:" />
      {notes.map(([t, e, y]) => <L key={t} x={955.500} e={e} y={y} s={26.500} c={GREEN} t={t} />)}
      <Plus at={[[1004.500, 253.500], [1179.500, 676.500], [955.500, 975.500]]} c={GREEN} />
      <Plus at={[[482.500, 291.500], [482.500, 390.500], [731.500, 247.500], [731.500, 272.500], [691.500, 595.500], [691.500, 643.500], [940.500, 595.500], [940.500, 643.500], [1129.500, 370.500], [1129.500, 577.500], [1488.500, 614.500], [1536.500, 614.500], [1537.500, 696.500]]} />

      {/* grid */}
      <path d={gx.map((x) => `M${x} 180V990`).join("") + gy.map((y) => `M424 ${y}H1905`).join("")} stroke="#bebebe" strokeOpacity=".3" />
      <path d="M621 900.500h20M631.500 890v20" stroke="#000" strokeDasharray="1 1" />
    </svg>
  );
}

/* Slab letters laid over the whole window: [glyph, left, right, baseline]. */
const stamp: [string, number, number, number][] = [
  ["S", 716, 777, 769], ["A", 814, 908, 769], ["M", 945, 1077, 769], ["P", 1117, 1200, 769], ["L", 1239, 1320, 769], ["E", 1359, 1440, 769],
  ["C", 266, 360, 967.500], ["S", 403, 463, 967.500], ["E", 506, 588, 967.500], ["D", 693, 791, 967.500], ["B", 835, 917, 967.500],
];

function Watermark() {
  return (
    <svg width="1920" height="1080" viewBox="0 0 1920 1080" className="pointer-events-none absolute inset-0" fontFamily="DejaVu Serif, serif" fontWeight="bold" fontSize="115" fill="#c3c3c3" stroke="#c3c3c3" strokeWidth="7">
      {stamp.map(([g, a, b, y]) => (
        <text key={g + a} x={a - 1} y={y - 3.500} textLength={b - a + 2} lengthAdjust="spacingAndGlyphs">{g}</text>
      ))}
    </svg>
  );
}

function Workspace() {
  return (
    <div className="flex min-w-0 grow flex-col bg-[#eee]">
      <div className="flex h-[35px] shrink-0 items-center pr-1 pl-[7px]">
        <span className="w-[128px] shrink-0 text-[13px] tracking-[-0.12px] text-[#333]">0.1 inch (4.9 -0.3)</span>
        <div className="flex h-[26px] grow items-center justify-between border border-[#1d8fb8] bg-white pr-[5px] pl-[6px]">
          <div className="h-[14px] w-px bg-black" />
          <Down />
        </div>
      </div>
      <div className="grid grid-cols-[1481px_15px] grid-rows-[810px_15px]">
        <Schematic />
        <div className={`${stipple} pt-[204px]`}>
          <div className="flex h-[558px] justify-center bg-[#eee]"><div className="w-[6px] rounded-full bg-[#7f7f7f]" /></div>
        </div>
        <div className={stipple}>
          <div className="flex h-full w-[1177px] items-center bg-[#eee]"><div className="h-[6px] w-full rounded-full bg-[#7f7f7f]" /></div>
        </div>
      </div>
    </div>
  );
}

function StatusBar() {
  return (
    <div className="flex h-[25px] items-center border-t border-[#7f7f7f] bg-[#eee] pt-px pl-[6px] text-[12.500px] tracking-[-0.3px] text-[#333]">
      <span className="grow">Left-click &amp; drag to define group (or left-click to start defining a group polygon)</span>
      <svg width="52" height="24" viewBox="0 0 52 24">
        <path d="M1.500 1v22M26.500 1v22" stroke="#c9c9c9" />
        <path d="M17 3L7 13h6l-4 8 15-11h-7l5-7z" fill="#c4c4c4" />
        <circle cx="41" cy="12" r="9.800" fill="#555" />
        <path d="M41 5.500v7.500M41 15.500v3" stroke="#fff" strokeWidth="2.600" />
      </svg>
    </div>
  );
}

/* ---------- taskbar ---------- */

function App30({ children }: Kids) {
  return <svg width="34" height="34" viewBox="0 0 34 34" className="shrink-0 overflow-visible">{children}</svg>;
}

function ChromeLogo() {
  return (
    <g>
      <circle cx="17" cy="17" r="15" fill="#fbc116" />
      <path d="M17 9.500H30A15 15 0 0 0 4 9.500l6.500 11z" fill="#db4437" />
      <path d="M4 9.500A15 15 0 0 0 17 32l6.500-11.300L17 24l-6.500-3.500z" fill="#1f9d55" />
      <circle cx="17" cy="17" r="7.500" fill="#fff" />
      <circle cx="17" cy="17" r="5.900" fill="#2b7de9" />
    </g>
  );
}

function Slot({ children, line, tile }: Kids & { line?: boolean; tile?: boolean }) {
  return (
    <div className={`flex h-full w-[62px] shrink-0 flex-col items-center ${tile ? "px-0.5" : ""}`}>
      <div className={`flex grow items-center justify-center ${tile ? "w-full border-r border-[#b9cdd6] bg-[#ebf4f7]" : ""}`}>{children}</div>
      {line && <div className={`h-[3px] shrink-0 bg-[#0b76cc] ${tile ? "w-full" : "w-[51px]"}`} />}
      {!line && <div className="h-[3px] shrink-0" />}
    </div>
  );
}

function Taskbar() {
  return (
    <div className="flex h-[50px] items-center bg-[linear-gradient(90deg,#cdeeee_0%,#d0e8ee_25%,#d4e5ee_50%,#d3dfec_75%,#d6dfeb_100%)] text-black">
      <div className="flex w-[60px] shrink-0 justify-center">
        <svg width="21" height="21" viewBox="0 0 20 20"><path d="M0 3l8-1.200v7.700H0zM9 1.600L20 0v9.500H9zM0 10.500h8v7.700L0 17zM9 10.500h11V20L9 18.400z" /></svg>
      </div>
      <div className="flex h-full w-[361px] shrink-0 items-center border border-[#c3cccd] bg-white">
        <svg width="22" height="22" viewBox="0 0 22 22" className="ml-[13px]" fill="none" stroke="#111" strokeWidth="1.500">
          <circle cx="13.500" cy="8" r="6.500" /><path d="M9 13l-7.500 7.500" />
        </svg>
        <span className="ml-[14px] grow text-[18.500px] tracking-[-0.35px] whitespace-nowrap text-[#333]">Type here to search</span>
        <svg width="97" height="48" viewBox="0 0 97 48" className="shrink-0">
          <defs>
            <radialGradient id="sky"><stop offset="0" stopColor="#0c2a66" /><stop offset=".45" stopColor="#2a4d8e" stopOpacity=".8" /><stop offset=".95" stopColor="#fff" stopOpacity="0" /></radialGradient>
            <radialGradient id="planet" cx=".6" cy=".35"><stop offset="0" stopColor="#f08a6c" /><stop offset=".5" stopColor="#dc3a5e" /><stop offset="1" stopColor="#a5107c" /></radialGradient>
            <linearGradient id="hull" x1="0" x2="1"><stop offset="0" stopColor="#77738c" /><stop offset=".5" stopColor="#f0ecf5" /><stop offset="1" stopColor="#8d879d" /></linearGradient>
          </defs>
          <ellipse cx="44" cy="34" rx="46" ry="36" fill="url(#sky)" />
          <circle cx="69" cy="4" r="30" fill="url(#planet)" />
          <path d="M45 0a16 13 0 0 0 26 10c4-3 4-8 3-10z" fill="#b81d4e" opacity=".55" />
          <path d="M38 29l11 12-2-11z" fill="#7fd2f7" />
          <g transform="translate(22 19) rotate(-42)"><path d="M-4 15V-8C-3-15 0-18 0-18s3 3 4 10v23z" fill="url(#hull)" /><path d="M-4 7l-4 10h4zM4 7l4 10H4z" fill="#9b96ad" /></g>
          <circle cx="12" cy="37" r="5.800" fill="#56838f" />
          <circle cx="36" cy="40" r="1.300" fill="#fff" /><circle cx="68" cy="39" r="1.300" fill="#fff" /><circle cx="79" cy="40" r="1.400" fill="#fff" /><circle cx="21" cy="33" r="1" fill="#fff" />
        </svg>
      </div>
      <div className="flex h-full pl-[2px]">
        <Slot line>
          <App30>
            <path d="M4 4h10l3 3h13v22H4z" fill="#fcd053" /><path d="M4 4h10l3 3-3 3H4z" fill="#d9a21b" />
            <path d="M8 31V18h18v13h-5v-6h-8v6z" fill="#3e95cf" />
          </App30>
        </Slot>
        <Slot>
          <App30>
            <defs><linearGradient id="edge" x1="0" x2="1" y1=".6" y2="0"><stop offset="0" stopColor="#1273c8" /><stop offset=".55" stopColor="#1fb4d9" /><stop offset="1" stopColor="#57dd6b" /></linearGradient></defs>
            <circle cx="17" cy="17" r="15" fill="url(#edge)" />
            <path d="M2.500 15c4-7 13-7 17 0-5-2-7 3-4 8 3 4 9 4 14 1-5 8-15 9-21 4C4 25 2 20 2.500 15z" fill="#0e59a8" />
            <path d="M19 16c-5 0-5 6-1 8 5 2 11 0 14-4 0 1-1 3-2 4l-7-1c4-4 0-8-4-7z" fill="#d3e8ee" />
            <circle cx="10" cy="25" r="7" fill="#a9adb0" /><circle cx="10" cy="22.500" r="2.600" fill="#e4e4e4" /><path d="M5 29c1-5 9-5 10 0-3 4-7 4-10 0z" fill="#e4e4e4" />
          </App30>
        </Slot>
        <Slot>
          <App30>
            <path d="M2 13L17 3l15 10v17H2z" fill="#0d5aa8" /><path d="M5 13h24v12H5z" fill="#fff" /><path d="M2 13l15 10L32 13v17H2z" fill="#2196e3" /><path d="M2 13l15 10L2 30z" fill="#3fb2f0" />
            <circle cx="32.500" cy="27" r="9.500" fill="#c8d2d8" stroke="#66727a" strokeWidth="1.200" />
            <text x="32.500" y="32" fontSize="14" textAnchor="middle">8</text>
          </App30>
        </Slot>
        <Slot line tile>
          <App30><path d="M7 3h20v7l-3-1h-8v5h9v6h-9v5h8l3-1v7H7v-4l2-2V9L7 7z" fill="#bd6c22" /><path d="M7 3h20v7l-3-1h-8L9 9 7 7zM16 14h9v3h-9z" fill="#d98a35" /></App30>
        </Slot>
        <Slot><App30><rect x="2" y="2" width="30" height="30" rx="13" fill="#0b5cff" /><text x="6" y="20" fontSize="10" fontWeight="bold" fill="#fff" textLength="22" lengthAdjust="spacingAndGlyphs">zoom</text></App30></Slot>
        <Slot line><div className="flex h-[29px] w-[29px] items-center justify-center rounded-full bg-black"><FaSpotify size={30} color="#1ed760" className="shrink-0" /></div></Slot>
        <Slot>
          <App30>
            <path d="M8 7l9 9 9-10M17 16L9 26M17 16l9 9" stroke="#bbb" strokeWidth="3" fill="none" />
            <circle cx="17" cy="16" r="5" fill="#e2e0e0" /><circle cx="16" cy="18" r="1.200" fill="#333" /><circle cx="19.500" cy="17" r="1.200" fill="#333" />
            <circle cx="8" cy="7" r="3.800" fill="#1787c0" /><circle cx="26.500" cy="6" r="4.300" fill="#1787c0" /><circle cx="9" cy="25" r="6.800" fill="#1787c0" /><circle cx="27" cy="24" r="4" fill="#1787c0" />
            <circle cx="7" cy="22.500" r="2" fill="#6cc4e8" />
          </App30>
        </Slot>
        <Slot><App30><rect x="2" y="2" width="30" height="30" /><path d="M12 7h3.500v20H12zM18.500 7H22v20h-3.500z" fill="#b1060f" /><path d="M12 7h3.700L22 27h-3.700z" fill="#e50914" /></App30></Slot>
        <Slot>
          <App30>
            <path d="M6 26h22l2 6H4z" fill="#f28a11" /><path d="M15.500 2h3L26 28c-4 2-14 2-18 0z" fill="#f28a11" />
            <path d="M14.300 7h5.400l1.700 5.500h-8.800zM11.300 17.500h11.400l1.800 6h-15z" fill="#eee" />
          </App30>
        </Slot>
        <Slot><App30><path fillRule="evenodd" d="M17 2a14 15 0 1 0 0 30 14 15 0 1 0 0-30zM17 5.500c4 0 6.500 5 6.500 11.500S21 28.500 17 28.500 10.500 23.500 10.500 17 13 5.500 17 5.500z" fill="#ee1b2e" /><path d="M17 5.500c3-2 9-1 11 4 5 10-1 22-11 19 4 0 6.500-5 6.500-11.500S21 5.500 17 5.500z" fill="#b50f1c" /></App30></Slot>
        <Slot>
          <App30>
            <defs><linearGradient id="fox" x1="1" x2="0" y1="0" y2="1"><stop offset="0" stopColor="#ffe53a" /><stop offset=".5" stopColor="#ff8a2a" /><stop offset="1" stopColor="#ee2a6c" /></linearGradient></defs>
            <path d="M18 2c4 3 5 5 8 8 3 2 5 6 5 10 0 7-6 12-14 12S3 26 3 18c0-4 2-8 3-10l2 3 2-4 4 3c2-2 2-5 4-8z" fill="url(#fox)" />
            <circle cx="17.500" cy="19" r="6.500" fill="#7240d8" /><path d="M8 13c5-3 8 0 11 2-4 0-6 2-5 6-4-1-6-4-6-8z" fill="#ff9c30" />
          </App30>
        </Slot>
        <Slot><App30><ChromeLogo /></App30></Slot>
        <Slot line>
          <App30><ChromeLogo /><circle cx="23.500" cy="24" r="10" fill="#6a6a66" /><path d="M15 30c3-5 6-1 8 0 3-5 7-4 10-2-3 7-13 9-18 2z" fill="#e8e8e8" /><circle cx="23" cy="21" r="4.500" fill="#b98d74" /><path d="M17 20c0-8 12-8 12 0-4-3-8-3-12 0zM19.500 23c2 2 5 2 7 0v4c-2 2-5 2-7 0z" fill="#2a2220" /></App30>
        </Slot>
      </div>
      <div className="grow" />
      <svg width="32" height="30" viewBox="0 0 32 30" className="mr-[3px] shrink-0">
        <circle cx="22" cy="8" r="8" fill="#f59a1c" />
        <path d="M7 29a7 7 0 0 1-1-14A9 9 0 0 1 22 12c3 1 4 3 4 5 7 1 6 12 0 12z" fill="#9cbcf2" />
        <path d="M3 26c6-4 8-7 14-5s8 0 13 1c0 4-2 7-5 7H7c-2 0-4-1-4-3z" fill="#c9dbfa" />
      </svg>
      <span className="ml-[6px] w-[188px] shrink-0 text-[17px] tracking-[0.02px] whitespace-pre">13°C  Mostly cloudy</span>
      <svg width="112" height="26" viewBox="0 0 112 26" className="shrink-0" fill="none" stroke="#111" strokeWidth="1.300">
        <path d="M2 16l7.500-7.500L17 16" />
        <path d="M35 3.500c3-2 6-2 9 0M35 22.500c3 2 6 2 9 0M36 7h7v12h-7a1.500 1.500 0 0 1-1.500-1.500v-9A1.500 1.500 0 0 1 36 7zM43 11l4-3v10l-4-3" />
        <path d="M65 6h13v11H61V13M68 21h8M72 17v4M60 4h5v6h-5zM62.500 10v8" />
        <path d="M90 10.500h3l4-4v13l-4-4h-3zM100 10l7 7M107 10l-7 7" />
      </svg>
      <span className="ml-[11px] w-[35px] shrink-0 text-[14px] tracking-[-0.2px]">ENG</span>
      <div className="w-[91px] shrink-0 text-center text-[14px] leading-[23px] tracking-[-0.3px]">09:13<br />01-02-2024</div>
      <svg width="66" height="40" viewBox="0 0 66 40" className="shrink-0">
        <path d="M16 10h20v16h-8l-5 5v-5h-7z" /><path d="M19.500 14h13M19.500 18h13M19.500 22h8" stroke="#fff" />
        <circle cx="35.500" cy="29.500" r="9.500" fill="#c9cfd6" stroke="#777" />
        <text x="35.500" y="34.500" fontSize="13.500" textAnchor="middle">3</text>
        <path d="M61.500 0v40" stroke="#9aa5b0" />
      </svg>
    </div>
  );
}

export default function App() {
  return (
    <div className="relative flex h-[1080px] w-[1920px] flex-col overflow-hidden bg-[#eee] font-['Noto_Sans','Open_Sans',sans-serif]">
      <TitleBar />
      <MenuBar />
      <MainToolbar />
      <SecondToolbar />
      <div className="flex h-[860px]">
        <Palette />
        <Panel />
        <Workspace />
      </div>
      <StatusBar />
      <Taskbar />
      <Watermark />
    </div>
  );
}
